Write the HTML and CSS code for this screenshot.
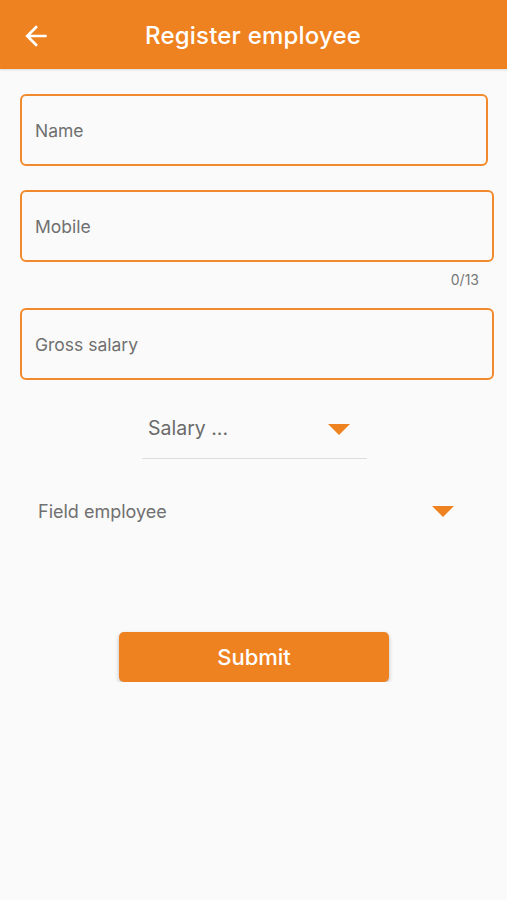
FILE: index.html
```html
<!DOCTYPE html>
<html lang="en">
<head>
    <meta charset="UTF-8">
    <meta name="viewport" content="width=device-width, initial-scale=1.0">
    <title>Register employee</title>
    <link rel="stylesheet" href="styles.css">
</head>
<body>
    <header class="app-bar">
        <button class="back-btn" aria-label="Back">
            <svg width="32" height="32" viewBox="0 0 24 24">
                <path d="M20 11H7.83l5.59-5.59L12 4l-8 8 8 8 1.41-1.41L7.83 13H20v-2z" fill="#fff"/>
            </svg>
        </button>
        <h1 class="title">Register employee</h1>
    </header>

    <form class="form">
        <!-- text fields -->
        <div class="field field-name">
            <input type="text" placeholder="Name">
        </div>

        <div class="field field-mobile">
            <input type="tel" placeholder="Mobile" maxlength="13">
        </div>
        <div class="counter">0/13</div>

        <div class="field field-gross">
            <input type="text" placeholder="Gross salary">
        </div>

        <!-- dropdowns -->
        <div class="salary-select">
            <span class="salary-label">Salary ...</span>
            <span class="caret"></span>
        </div>

        <div class="type-select">
            <span class="type-label">Field employee</span>
            <span class="caret"></span>
        </div>

        <div class="actions">
            <button type="submit" class="btn-submit">Submit</button>
        </div>
    </form>
</body>
</html>
```

FILE: styles.css
```css
body {
    margin: 0;
    background-color: #fafafa;
    font-family: Inter, "Noto Sans", sans-serif;
    color: #6f6f6f;
}

.app-bar {
    height: 69px;
    background-color: #ef8220;
    display: flex;
    align-items: center;
    box-shadow: 0 1px 2px rgba(0, 0, 0, 0.12);
}

.back-btn {
    background: none;
    border: none;
    padding: 0;
    margin-left: 20px;
    margin-top: 2px;
    display: flex;
}

.title {
    margin: 2px 0 0 93px;
    font-size: 24px;
    font-weight: 500;
    color: #fff;
    letter-spacing: 0.2px;
}

.form {
    padding: 25px 13px 0 20px;
}

.field {
    box-sizing: border-box;
    height: 72px;
    border: 2px solid #f08a2c;
    border-radius: 6px;
    display: flex;
    align-items: center;
    margin-bottom: 24px;
}

.field-name {
    margin-right: 6px;
}

.field-mobile {
    margin-bottom: 10px;
}

.field input {
    border: none;
    background: transparent;
    outline: none;
    width: 100%;
    padding: 0 13px;
    font-family: inherit;
    font-size: 17.5px;
    color: #333;
}

.field input::placeholder {
    color: #707070;
}

.counter {
    text-align: right;
    font-size: 14px;
    line-height: 16px;
    color: #777;
    padding-right: 15px;
    margin-bottom: 20px;
}

.salary-select {
    width: 225px;
    margin: 28px 0 0 122px;
    height: 51px;
    border-bottom: 1px solid #ddd;
    display: flex;
    align-items: center;
    justify-content: space-between;
    box-sizing: border-box;
    padding: 0 17px 0 6px;
}

.salary-label {
    font-size: 19.5px;
    color: #6a6a6a;
    margin-top: -10px;
}

.salary-select .caret {
    margin-top: -8px;
}

.caret {
    width: 0;
    height: 0;
    border-left: 11px solid transparent;
    border-right: 11px solid transparent;
    border-top: 11px solid #ef8220;
}

.type-select {
    display: flex;
    align-items: center;
    justify-content: space-between;
    padding: 0 40px 0 18px;
    margin-top: 42px;
}

.type-label {
    font-size: 18px;
    color: #707070;
}

.actions {
    display: flex;
    justify-content: center;
    margin-top: 110px;
}

.btn-submit {
    width: 270px;
    height: 50px;
    background-color: #ef8220;
    color: #fff;
    border: none;
    border-radius: 5px;
    font-family: inherit;
    font-size: 22px;
    font-weight: 500;
    box-shadow: 0 2px 4px rgba(0, 0, 0, 0.25);
    margin-left: -6px;
}
```
